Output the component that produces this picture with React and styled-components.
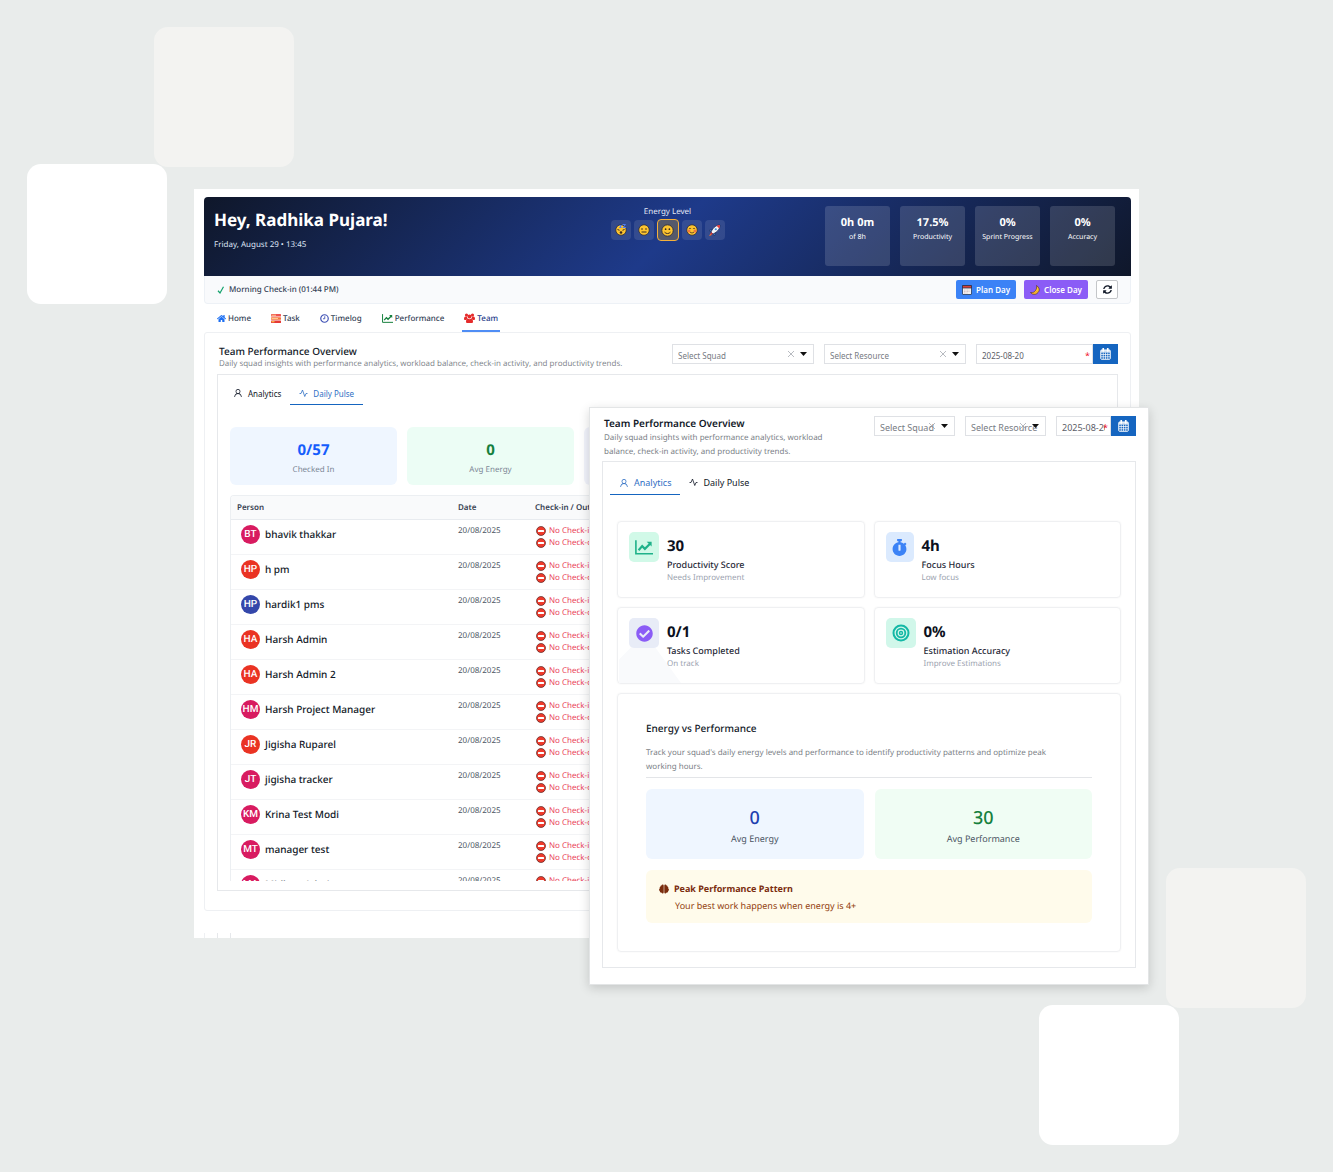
import React, { useState } from "react";
import styled, { createGlobalStyle } from "styled-components";
import { FaHome, FaSyncAlt, FaStopwatch, FaCheckCircle, FaBrain } from "react-icons/fa";
import { AiOutlineUser } from "react-icons/ai";

const people = [
  { initials: "BT", name: "bhavik thakkar", color: "#d81b60" },
  { initials: "HP", name: "h pm", color: "#ea3323" },
  { initials: "HP", name: "hardik1 pms", color: "#3447aa" },
  { initials: "HA", name: "Harsh Admin", color: "#ea3323" },
  { initials: "HA", name: "Harsh Admin 2", color: "#ea3323" },
  { initials: "HM", name: "Harsh Project Manager", color: "#d81b60" },
  { initials: "JR", name: "Jigisha Ruparel", color: "#ea3323" },
  { initials: "JT", name: "jigisha tracker", color: "#d81b60" },
  { initials: "KM", name: "Krina Test Modi", color: "#d81b60" },
  { initials: "MT", name: "manager test", color: "#d81b60" },
  { initials: "MA", name: "Midhun Admin", color: "#d81b60" },
];

const dayStats = [
  { value: "0h 0m", label: "of 8h" },
  { value: "17.5%", label: "Productivity" },
  { value: "0%", label: "Sprint Progress" },
  { value: "0%", label: "Accuracy" },
];

const TaskIcon = () => (
  <svg width="10" height="9" viewBox="0 0 20 18" aria-hidden="true">
    <rect width="20" height="5" rx="1" fill="#ef5350" />
    <rect y="6.500" width="20" height="5" rx="1" fill="#f4733d" />
    <rect y="13" width="20" height="5" rx="1" fill="#e53935" />
    <rect x="1" y="1.500" width="9" height="2" fill="#ffc78a" />
    <rect x="1" y="8" width="13" height="2" fill="#ffc78a" />
    <rect x="1" y="14.500" width="6" height="2" fill="#ffd54f" />
  </svg>
);

const ClockIcon = () => (
  <svg width="9" height="9" viewBox="0 0 18 18" fill="none" aria-hidden="true">
    <circle cx="9" cy="9" r="7.500" stroke="#3f51b5" strokeWidth="2.400" />
    <path d="M9.500 4.500V9.500H6" stroke="#3f51b5" strokeWidth="1.800" />
  </svg>
);

const ChartIcon = ({ width, height, color }) => (
  <svg width={width} height={height} viewBox="0 0 20 16" fill="none" stroke={color} aria-hidden="true">
    <path d="M1 0v15h19" strokeWidth="1.800" />
    <path d="M4 11l4-4.500 3 3L17 3.500" strokeWidth="2.400" />
    <path d="M13 1.500h5.500V7z" fill={color} stroke="none" />
  </svg>
);

const TeamIcon = () => (
  <svg width="11" height="10" viewBox="0 0 22 20" fill="#e52b2b" aria-hidden="true">
    <circle cx="5" cy="4" r="3.200" />
    <circle cx="17" cy="4" r="3.200" />
    <circle cx="11" cy="7" r="4" />
    <path d="M0 12c0-3 1-5 3-5h3c0 3 1 4 2 5-2 0-3 1-3.500 2H2c-1 0-2-1-2-2zM22 12c0-3-1-5-3-5h-3c0 3-1 4-2 5 2 0 3 1 3.500 2H20c1 0 2-1 2-2z" />
    <path d="M4 17c0-4 2-5.500 4-5.500 2 1 4 1 6 0 2 0 4 1.500 4 5.500 0 2-1 3-3 3H7c-2 0-3-1-3-3z" />
  </svg>
);

const PulseIcon = () => (
  <svg width="9" height="9" viewBox="0 0 18 18" fill="none" aria-hidden="true">
    <path
      d="M1 9h3L7 2l4.500 13L14 9h3"
      stroke="currentColor"
      strokeWidth="1.600"
      strokeLinejoin="round"
    />
  </svg>
);

const CalendarIcon = () => (
  <svg width="11" height="12" viewBox="0 0 22 24" fill="none" aria-hidden="true">
    <rect x="1.500" y="4" width="19" height="18.500" rx="1.500" stroke="#fff" strokeWidth="2" />
    <path d="M2 8.500h18M2 13h18M2 17.500h18M6.500 9v13M11 9v13M15.500 9v13" stroke="#fff" strokeWidth="1.400" />
    <path d="M2 6h18" stroke="#fff" strokeWidth="3" />
    <path d="M6.500 1v5M15.500 1v5" stroke="#fff" strokeWidth="3.400" strokeLinecap="round" />
  </svg>
);

const PlanIcon = () => (
  <svg width="10" height="10" viewBox="0 0 20 20" aria-hidden="true">
    <rect x="1" y="1" width="18" height="18" rx="1" fill="#f4f1f1" stroke="#22304e" strokeWidth="1.500" />
    <path d="M1 1h18v5H1z" fill="#d8413a" stroke="#22304e" strokeWidth="1.500" />
    <path d="M4 10h12M4 13h12M4 16h7" stroke="#d0b5b7" strokeWidth="1.500" strokeDasharray="2 1" />
  </svg>
);

const MoonIcon = () => (
  <svg width="10" height="10" viewBox="0 0 20 20" aria-hidden="true">
    <path
      d="M13 1c6 4 7 10 3 14-4 5-11 5-15 0 5 1 8-1 10-4 2-3 3-6 2-10z"
      fill="#fdc530"
      stroke="#4a2d26"
      strokeWidth="1.300"
    />
    <path d="M4 16.500c5 1 9-1 11-5" stroke="#e8892b" strokeWidth="1.500" fill="none" />
  </svg>
);

const TargetIcon = () => (
  <svg width="18" height="18" viewBox="0 0 18 18" fill="none" stroke="#14b8a6" aria-hidden="true">
    <circle cx="9" cy="9" r="7.500" strokeWidth="2" />
    <circle cx="9" cy="9" r="4.300" strokeWidth="1.800" />
    <circle cx="9" cy="9" r="1.500" strokeWidth="1.400" />
  </svg>
);

const NoEntryIcon = () => (
  <svg width="10" height="10" viewBox="0 0 20 20" aria-hidden="true">
    <circle cx="10" cy="10" r="9" fill="#f03a2b" stroke="#4a2020" strokeWidth="1.300" />
    <rect x="4" y="8" width="12" height="4" rx="1" fill="#fff" />
  </svg>
);

const Face = ({ kind, size = 12 }) => (
  <svg width={size} height={size} viewBox="0 0 24 24" fill="none" aria-hidden="true">
    <circle cx="12" cy="12" r="10.500" fill="#fdc42f" stroke="#2b2a3a" strokeWidth="1.600" />
    {kind === "sleepy" && (
      <>
        <path d="M5 11l4 1.500M19 11l-4 1.500" stroke="#3b2a20" strokeWidth="2" />
        <circle cx="12" cy="17" r="2.600" fill="#3b2a20" />
        <path d="M9 3h4l-4 4h4M15 1h6l-5 6h6" stroke="#4f7df0" strokeWidth="2" />
      </>
    )}
    {kind === "neutral" && (
      <>
        <circle cx="8" cy="10" r="1.600" fill="#3b2a20" />
        <circle cx="16" cy="10" r="1.600" fill="#3b2a20" />
        <path d="M7 16h10" stroke="#3b2a20" strokeWidth="2" />
      </>
    )}
    {kind === "smile" && (
      <>
        <circle cx="8.500" cy="9.500" r="1.600" fill="#3b2a20" />
        <circle cx="15.500" cy="9.500" r="1.600" fill="#3b2a20" />
        <path d="M6.500 15c3 3.500 8 3.500 11 0" stroke="#3b2a20" strokeWidth="1.800" />
      </>
    )}
    {kind === "happy" && (
      <>
        <circle cx="6" cy="14" r="3" fill="#f2763f" />
        <circle cx="18" cy="14" r="3" fill="#f2763f" />
        <path d="M6 10c1-2 3-2 4 0M14 10c1-2 3-2 4 0M8 16c2 2.500 6 2.500 8 0" stroke="#3b2a20" strokeWidth="1.500" />
      </>
    )}
  </svg>
);

const RocketIcon = () => (
  <svg width="13" height="13" viewBox="0 0 26 26" aria-hidden="true">
    <path d="M8 11l-6 2 4 3zM15 18l-2 6-3-4z" fill="#3f8fe0" stroke="#17264f" />
    <path d="M5 19l-3 5 6-2z" fill="#f3722c" />
    <path d="M24 2c-7 0-13 4-18 14l4 4C20 15 24 9 24 2z" fill="#f3f4f8" stroke="#17264f" strokeWidth="1.300" />
    <path d="M24 2c-3 0-5 .500-7 1.500l5.500 5.500c1-2 1.500-4 1.500-7z" fill="#e23b3b" />
    <circle cx="15.500" cy="10.500" r="2.200" fill="#3f8fe0" />
    <path d="M6 16l4 4-4 1-1-1z" fill="#d63333" />
  </svg>
);

const PickList = ({ label }) => (
  <PickWrapper>
    <select aria-label={label} defaultValue="">
      <option value="">{label}</option>
    </select>
    <svg className="clear" width="6" height="6" viewBox="0 0 6 6" aria-hidden="true">
      <path d="M0 0l6 6M6 0L0 6" stroke="#9a9ea6" strokeWidth="0.700" />
    </svg>
    <svg className="caret" width="7" height="4" viewBox="0 0 7 4" aria-hidden="true">
      <path d="M0 0h7L3.500 4z" fill="#111" />
    </svg>
  </PickWrapper>
);

const DateField = () => (
  <DateWrapper>
    <input type="text" aria-label="Date" defaultValue="2025-08-20" />
    <span>*</span>
    <button type="button" aria-label="Open calendar">
      <CalendarIcon />
    </button>
  </DateWrapper>
);

const InnerTabs = ({ active, onSelect, large }) => (
  <InnerTabBar>
    <InnerTab
      type="button"
      $large={large}
      $active={active === "analytics"}
      onClick={() => onSelect("analytics")}
    >
      <AiOutlineUser size={10} />
      Analytics
    </InnerTab>
    <InnerTab
      type="button"
      $large={large}
      $active={active === "pulse"}
      onClick={() => onSelect("pulse")}
    >
      <PulseIcon />
      Daily Pulse
    </InnerTab>
  </InnerTabBar>
);

const Metric = ({ icon, tint, narrow, value, label, note, shade }) => (
  <MetricCard $shade={shade}>
    <MetricIcon $tint={tint} $narrow={narrow}>
      {icon}
    </MetricIcon>
    <div>
      <strong>{value}</strong>
      <p>{label}</p>
      <small>{note}</small>
    </div>
  </MetricCard>
);

const App = () => {
  const [energy, setEnergy] = useState(2);
  const [mainTab, setMainTab] = useState("pulse");
  const [popupTab, setPopupTab] = useState("analytics");

  const moods = [
    { name: "Exhausted", icon: <Face kind="sleepy" /> },
    { name: "Neutral", icon: <Face kind="neutral" /> },
    { name: "Good", icon: <Face kind="smile" size={13} /> },
    { name: "Happy", icon: <Face kind="happy" /> },
    { name: "Energized", icon: <RocketIcon /> },
  ];

  return (
    <Page>
      <GlobalStyle />
      <Tile $soft className="top-soft" />
      <Tile className="top" />
      <Tile $soft className="bottom-soft" />
      <Tile className="bottom" />

      <Stage>
        <Dashboard>
          <Banner>
            <Greeting>
              <h1>Hey, Radhika Pujara!</h1>
              <p>Friday, August 29 • 13:45</p>
            </Greeting>
            <Energy>
              <span>Energy Level</span>
              <div>
                {moods.map((mood, index) => (
                  <MoodButton
                    key={mood.name}
                    type="button"
                    aria-label={mood.name}
                    $active={energy === index}
                    onClick={() => setEnergy(index)}
                  >
                    {mood.icon}
                  </MoodButton>
                ))}
              </div>
            </Energy>
            <DayStats>
              {dayStats.map((stat) => (
                <DayStat key={stat.label}>
                  <strong>{stat.value}</strong>
                  <span>{stat.label}</span>
                </DayStat>
              ))}
            </DayStats>
          </Banner>

          <CheckinBar>
            <svg width="8" height="8" viewBox="0 0 16 16" fill="none" aria-hidden="true">
              <path d="M2 9.500l4 4.500L13 1.500" stroke="#12a26b" strokeWidth="2.400" />
            </svg>
            <p>Morning Check-in (01:44 PM)</p>
            <ActionButton type="button" $color="#3b82f6">
              <PlanIcon /> Plan Day
            </ActionButton>
            <ActionButton type="button" $color="#8b5cf6">
              <MoonIcon /> Close Day
            </ActionButton>
            <RefreshButton type="button" aria-label="Refresh">
              <FaSyncAlt size={9} />
            </RefreshButton>
          </CheckinBar>

          <MainNav>
            <NavItem href="#home">
              <FaHome size={9} color="#1d6ff2" /> Home
            </NavItem>
            <NavItem href="#task">
              <TaskIcon /> Task
            </NavItem>
            <NavItem href="#timelog">
              <ClockIcon /> Timelog
            </NavItem>
            <NavItem href="#performance">
              <ChartIcon width={11} height={9} color="#15803d" /> Performance
            </NavItem>
            <NavItem href="#team" $active>
              <TeamIcon /> Team
            </NavItem>
          </MainNav>

          <Content>
            <SectionHead>
              <div>
                <h2>Team Performance Overview</h2>
                <p>
                  Daily squad insights with performance analytics, workload balance, check-in
                  activity, and productivity trends.
                </p>
              </div>
              <PickList label="Select Squad" />
              <PickList label="Select Resource" />
              <DateField />
            </SectionHead>
            <Frame>
              <InnerTabs active={mainTab} onSelect={setMainTab} />
              <SummaryGrid>
                <Summary $bg="#eff6ff" $color="#155dfc">
                  <strong>0/57</strong>
                  <span>Checked In</span>
                </Summary>
                <Summary $bg="#ecfdf5" $color="#15803d">
                  <strong>0</strong>
                  <span>Avg Energy</span>
                </Summary>
                <Summary $bg="#f1f3fb" />
              </SummaryGrid>
              <TableWindow>
                <table>
                  <thead>
                    <tr>
                      <th>Person</th>
                      <th>Date</th>
                      <th>Check-in / Out</th>
                    </tr>
                  </thead>
                  <tbody>
                    {people.map((person) => (
                      <tr key={person.name}>
                        <td>
                          <Person>
                            <Avatar $color={person.color}>{person.initials}</Avatar>
                            {person.name}
                          </Person>
                        </td>
                        <td>20/08/2025</td>
                        <td>
                          <Missing>
                            <NoEntryIcon /> No Check-in
                          </Missing>
                          <Missing>
                            <NoEntryIcon /> No Check-out
                          </Missing>
                        </td>
                      </tr>
                    ))}
                  </tbody>
                </table>
              </TableWindow>
            </Frame>
          </Content>
          <NextSection>
            <div>
              <div />
            </div>
          </NextSection>
        </Dashboard>

        <Popup>
          <PopupHead>
            <div>
              <h2>Team Performance Overview</h2>
              <p>
                Daily squad insights with performance analytics, workload balance, check-in
                activity, and productivity trends.
              </p>
            </div>
            <PickList label="Select Squad" />
            <PickList label="Select Resource" />
            <DateField />
          </PopupHead>
          <PopupFrame>
            <InnerTabs active={popupTab} onSelect={setPopupTab} large />
            <MetricGrid>
              <Metric
                icon={<ChartIcon width={18} height={15} color="#1fb28a" />}
                tint="#d1f9e8"
                value="30"
                label="Productivity Score"
                note="Needs Improvement"
              />
              <Metric
                icon={<FaStopwatch size={17} color="#3b82f6" />}
                tint="#dbeafe"
                narrow
                value="4h"
                label="Focus Hours"
                note="Low focus"
              />
              <Metric
                icon={<FaCheckCircle size={17} color="#8b5cf6" />}
                tint="#e8ecf7"
                value="0/1"
                label="Tasks Completed"
                note="On track"
                shade
              />
              <Metric
                icon={<TargetIcon />}
                tint="#d1f7ea"
                value="0%"
                label="Estimation Accuracy"
                note="Improve Estimations"
              />
            </MetricGrid>
            <EnergyCard>
              <h3>Energy vs Performance</h3>
              <p>
                Track your squad's daily energy levels and performance to identify productivity
                patterns and optimize peak working hours.
              </p>
              <AverageGrid>
                <Average $bg="#eff6ff" $color="#1e40af">
                  <strong>0</strong>
                  <span>Avg Energy</span>
                </Average>
                <Average $bg="#f0fdf4" $color="#15803d">
                  <strong>30</strong>
                  <span>Avg Performance</span>
                </Average>
              </AverageGrid>
              <Pattern>
                <h4>
                  <FaBrain size={10} /> Peak Performance Pattern
                </h4>
                <p>Your best work happens when energy is 4+</p>
              </Pattern>
            </EnergyCard>
          </PopupFrame>
        </Popup>
      </Stage>
    </Page>
  );
};

const GlobalStyle = createGlobalStyle`
  * {
    box-sizing: border-box;
  }
  body {
    margin: 0;
    background: #e9eceb;
    font-family: "Noto Sans", "Open Sans", sans-serif;
    color: #111827;
    text-rendering: geometricPrecision;
  }
  h1, h2, h3, h4, p {
    margin: 0;
  }
  button, input, select {
    font: inherit;
    color: inherit;
    border-radius: 0;
    margin: 0;
  }
  button {
    cursor: pointer;
  }
  svg {
    flex: none;
  }
`;

const Page = styled.div`
  position: relative;
  min-height: 100vh;
  padding: 189px 194px 234px;
  overflow: hidden;

  .top-soft {
    left: 154px;
    top: 27px;
  }
  .top {
    left: 27px;
    top: 164px;
  }
  .bottom-soft {
    right: 27px;
    bottom: 164px;
  }
  .bottom {
    right: 154px;
    bottom: 27px;
  }
`;

/* loose squares floating behind the windows */
const Tile = styled.div`
  position: absolute;
  width: 140px;
  height: 140px;
  border-radius: 14px;
  background: ${({ $soft }) => ($soft ? "#f3f3f1" : "#fff")};
`;

const Stage = styled.main`
  position: relative;
`;

const Dashboard = styled.section`
  padding: 8px 8px 0 10px;
  background: #fff;
`;

const Banner = styled.header`
  display: grid;
  grid-template-columns: 1fr auto 1fr;
  height: 79px;
  padding: 9px 16px 0 10px;
  border-radius: 4px 4px 0 0;
  background: linear-gradient(135deg, #0f172a 0%, #1e3a8a 50%, #0f172a 100%);
  color: #fff;
`;

const Greeting = styled.div`
  h1 {
    padding-top: 1px;
    font-size: 17px;
    line-height: 26px;
    font-weight: 700;
  }
  p {
    margin-top: 5px;
    font-size: 8px;
    line-height: 14px;
    color: #dbe3f4;
  }
`;

const Energy = styled.div`
  display: flex;
  flex-direction: column;
  align-items: center;
  padding-left: 6px;

  span {
    font-size: 8px;
    line-height: 12px;
    color: #e2e8f6;
  }
  div {
    display: flex;
    align-items: center;
    gap: 3px;
    margin-top: 1px;
  }
`;

const MoodButton = styled.button`
  display: flex;
  align-items: center;
  justify-content: center;
  width: ${({ $active }) => ($active ? "22px" : "20px")};
  height: ${({ $active }) => ($active ? "22px" : "20px")};
  padding: 0;
  border: ${({ $active }) => ($active ? "1px solid #f5b03a" : "none")};
  border-radius: 4px;
  background: ${({ $active }) => ($active ? "#55596b" : "rgba(255, 255, 255, 0.1)")};
`;

const DayStats = styled.div`
  display: flex;
  justify-content: flex-end;
  gap: 10px;
`;

const DayStat = styled.div`
  display: flex;
  flex-direction: column;
  align-items: center;
  width: 65px;
  height: 60px;
  padding-top: 9px;
  border-radius: 3px;
  background: rgba(255, 255, 255, 0.14);

  strong {
    font-size: 11px;
    line-height: 15px;
  }
  span {
    margin-top: 2px;
    font-size: 7px;
    line-height: 12px;
    white-space: nowrap;
  }
`;

const CheckinBar = styled.div`
  display: flex;
  align-items: center;
  gap: 8px;
  height: 28px;
  padding: 0 12px;
  border: 1px solid #edf1f6;
  border-top: none;
  border-radius: 0 0 4px 4px;
  background: #f9fafc;
  font-size: 8px;

  p {
    flex: 1;
    margin-left: -4px;
    font-weight: 500;
    color: #334155;
  }
`;

const ActionButton = styled.button`
  display: flex;
  align-items: center;
  gap: 4px;
  height: 19px;
  padding: 0 6px;
  border: none;
  border-radius: 2px;
  background: ${({ $color }) => $color};
  color: #fff;
  font-weight: 600;
`;

const RefreshButton = styled.button`
  display: flex;
  align-items: center;
  justify-content: center;
  width: 22px;
  height: 19px;
  padding: 0;
  border: 1px solid #c4c6c9;
  border-radius: 2px;
  background: #fff;
`;

const MainNav = styled.nav`
  display: flex;
  gap: 16px;
  height: 28px;
  padding: 0 11px;
`;

const NavItem = styled.a`
  display: flex;
  align-items: center;
  gap: 2px;
  padding: 2px 2px 0;
  border-bottom: 2px solid ${({ $active }) => ($active ? "#4f8df5" : "transparent")};
  color: ${({ $active }) => ($active ? "#1e3a8a" : "#334155")};
  font-size: 8px;
  font-weight: 500;
  text-decoration: none;
`;

const Content = styled.div`
  padding: 11px 12px 19px;
  border: 1px solid #eef0f3;
  border-radius: 3px;
`;

const SectionHead = styled.div`
  display: flex;
  align-items: flex-start;
  gap: 10px;
  padding-left: 2px;

  > div:first-child {
    flex: 1;
    height: 30px;
  }
  > label {
    width: 142px;
  }
  h2 {
    font-size: 10px;
    line-height: 14px;
    font-weight: 500;
  }
  p {
    font-family: "Open Sans", "Noto Sans", sans-serif;
    font-size: 8px;
    line-height: 12px;
    color: #7b7f87;
  }
`;

const PickWrapper = styled.label`
  position: relative;
  display: block;

  select {
    display: block;
    width: 100%;
    height: 20px;
    padding: 2px 5px 0;
    appearance: none;
    border: 1px solid #dfe1e5;
    background: #fff;
    color: #777b83;
    font-size: 8px;
  }
  svg {
    position: absolute;
    pointer-events: none;
  }
  .clear {
    right: 20px;
    top: 7px;
  }
  .caret {
    right: 7px;
    top: 8px;
  }
`;

const DateWrapper = styled.div`
  position: relative;
  display: flex;
  width: 142px;

  input {
    flex: 1;
    min-width: 0;
    height: 20px;
    padding: 2px 5px 0;
    border: 1px solid #dfe1e5;
    font-size: 8px;
    color: #5c6068;
  }
  span {
    position: absolute;
    right: 28px;
    top: 6px;
    font-size: 9px;
    line-height: 12px;
    color: #f0142f;
  }
  button {
    display: flex;
    align-items: center;
    justify-content: center;
    width: 25px;
    height: 20px;
    padding: 0;
    border: none;
    background: #1565c0;
  }
`;

const Frame = styled.div`
  padding: 7px 12px 9px;
  border: 1px solid #e6e8eb;
  font-size: 8px;

  > div:first-child {
    margin-left: -6px;
  }
`;

const InnerTabBar = styled.div`
  display: flex;
`;

const InnerTab = styled.button`
  display: flex;
  align-items: center;
  gap: 5px;
  height: ${({ $large }) => ($large ? "24px" : "23px")};
  padding: 0 9px;
  border: none;
  border-bottom: 1px solid ${({ $active }) => ($active ? "#1565c0" : "transparent")};
  background: none;
  color: ${({ $active }) => ($active ? "#2f6fc4" : "#111827")};
`;

const SummaryGrid = styled.div`
  display: grid;
  grid-template-columns: repeat(5, 1fr);
  gap: 10px;
  margin: 22px 0 10px;
`;

const Summary = styled.div`
  display: flex;
  flex-direction: column;
  align-items: center;
  height: 58px;
  padding-top: 12px;
  border-radius: 6px;
  background: ${({ $bg }) => $bg};

  strong {
    font-size: 15px;
    line-height: 22px;
    color: ${({ $color }) => $color};
  }
  span {
    margin-top: 3px;
    font-size: 8px;
    line-height: 12px;
    color: #7c8796;
  }
`;

const TableWindow = styled.div`
  height: 386px;
  overflow: hidden;
  border: 1px solid #eceff2;
  border-bottom: none;
  border-radius: 4px 4px 0 0;

  table {
    width: 100%;
    table-layout: fixed;
    border-collapse: collapse;
  }
  th {
    height: 23px;
    padding: 0;
    border-bottom: 1px solid #e8ebef;
    background: #f9fafb;
    color: #374151;
    font-size: 8px;
    font-weight: 600;
    text-align: left;
  }
  th:first-child {
    width: 227px;
    padding-left: 6px;
  }
  th:nth-child(2) {
    width: 77px;
  }
  td {
    height: 35px;
    padding: 5px 0 0;
    border-bottom: 1px solid #f3f4f6;
    vertical-align: top;
    font-size: 8px;
    line-height: 12px;
    color: #4b5563;
  }
`;

const Person = styled.div`
  display: flex;
  align-items: center;
  gap: 5px;
  padding-left: 10px;
  font-size: 10px;
  font-weight: 500;
  color: #111827;
`;

const Avatar = styled.span`
  width: 19px;
  height: 19px;
  border-radius: 50%;
  background: ${({ $color }) => $color};
  color: #fff;
  font-family: Roboto, "Liberation Sans", sans-serif;
  font-size: 10px;
  font-weight: 500;
  line-height: 19px;
  text-align: center;
`;

const Missing = styled.div`
  display: flex;
  align-items: center;
  gap: 3px;
  padding-left: 1px;
  line-height: 12px;
  color: #ea4257;
`;

/* top edge of whatever comes after the fold */
const NextSection = styled.div`
  height: 5px;
  margin-top: 22px;
  padding-left: 12px;
  border-left: 1px solid #eef0f3;

  div {
    height: 5px;
    padding-left: 12px;
    border-left: 1px solid #e6e8eb;
  }
`;

const Popup = styled.section`
  position: absolute;
  top: 218px;
  left: 395px;
  right: -10px;
  padding: 8px 12px 16px;
  border: 1px solid #e3e5e6;
  background: #fff;
  box-shadow: 0 3px 10px rgba(0, 0, 0, 0.16);
`;

const PopupHead = styled(SectionHead)`
  > div:first-child {
    height: 45px;
  }
  > div:last-child {
    width: 80px;
  }
  > label {
    width: 81px;
  }
  h2 {
    font-weight: 600;
    line-height: 15px;
  }
  p {
    max-width: 240px;
    font-family: "Noto Sans", "Open Sans", sans-serif;
    line-height: 14px;
  }
  input,
  select {
    font-size: 9px;
  }
`;

const PopupFrame = styled.div`
  padding: 9px 14px 15px;
  border: 1px solid #e6e8eb;
  font-size: 9px;

  > div:first-child {
    margin-left: -7px;
  }
`;

const MetricGrid = styled.div`
  display: grid;
  grid-template-columns: 1fr 1fr;
  gap: 9px;
  margin-top: 26px;
`;

const MetricCard = styled.div`
  position: relative;
  display: flex;
  align-items: flex-start;
  gap: 8px;
  height: 77px;
  padding: 10px 11px;
  border: 1px solid #eff0f2;
  border-radius: 4px;
  box-shadow: 0 0 2px rgba(0, 0, 0, 0.05);

  &::before {
    content: "";
    display: ${({ $shade }) => ($shade ? "block" : "none")};
    position: absolute;
    left: 1px;
    bottom: 0;
    width: 62px;
    height: 36px;
    background: #f9fafc;
    clip-path: polygon(20% 0, 58% 0, 100% 100%, 0 100%, 0 35%);
  }
  > div {
    position: relative;
  }
  strong {
    display: block;
    font-size: 15px;
    line-height: 22px;
    padding-top: 3px;
    color: #0b1020;
  }
  p {
    margin-top: 1px;
    font-size: 9px;
    font-weight: 500;
    line-height: 14px;
    color: #1f2937;
  }
  small {
    display: block;
    font-size: 8px;
    line-height: 12px;
    color: #9ca3af;
  }
`;

const MetricIcon = styled.div`
  display: flex;
  align-items: center;
  justify-content: center;
  width: ${({ $narrow }) => ($narrow ? "28px" : "30px")};
  height: 30px;
  border-radius: 5px;
  background: ${({ $tint }) => $tint};
`;

const EnergyCard = styled.div`
  margin-top: 9px;
  padding: 27px 28px 28px;
  border: 1px solid #eff0f2;
  border-radius: 4px;
  box-shadow: 0 0 2px rgba(0, 0, 0, 0.05);

  h3 {
    font-size: 10px;
    line-height: 14px;
    font-weight: 500;
  }
  > p {
    margin-top: 11px;
    padding: 0 20px 3px 0;
    border-bottom: 1px solid #e3e5e8;
    font-size: 8px;
    line-height: 14px;
    color: #7b7f87;
  }
`;

const AverageGrid = styled.div`
  display: grid;
  grid-template-columns: 1fr 1fr;
  gap: 11px;
  margin: 11px 0;
`;

const Average = styled.div`
  display: flex;
  flex-direction: column;
  align-items: center;
  height: 70px;
  padding-top: 17px;
  border-radius: 6px;
  background: ${({ $bg }) => $bg};

  strong {
    font-size: 18px;
    line-height: 24px;
    font-weight: 500;
    color: ${({ $color }) => $color};
  }
  span {
    margin-top: 2px;
    font-size: 9px;
    line-height: 14px;
    color: #4b5563;
  }
`;

const Pattern = styled.div`
  height: 53px;
  padding: 12px 13px;
  border-radius: 6px;
  background: #fffbeb;

  h4 {
    display: flex;
    align-items: center;
    gap: 5px;
    font-size: 9px;
    line-height: 14px;
    color: #7b2d0e;
  }
  p {
    margin-top: 3px;
    padding-left: 16px;
    font-size: 9px;
    line-height: 14px;
    color: #92400e;
  }
`;

export default App;
